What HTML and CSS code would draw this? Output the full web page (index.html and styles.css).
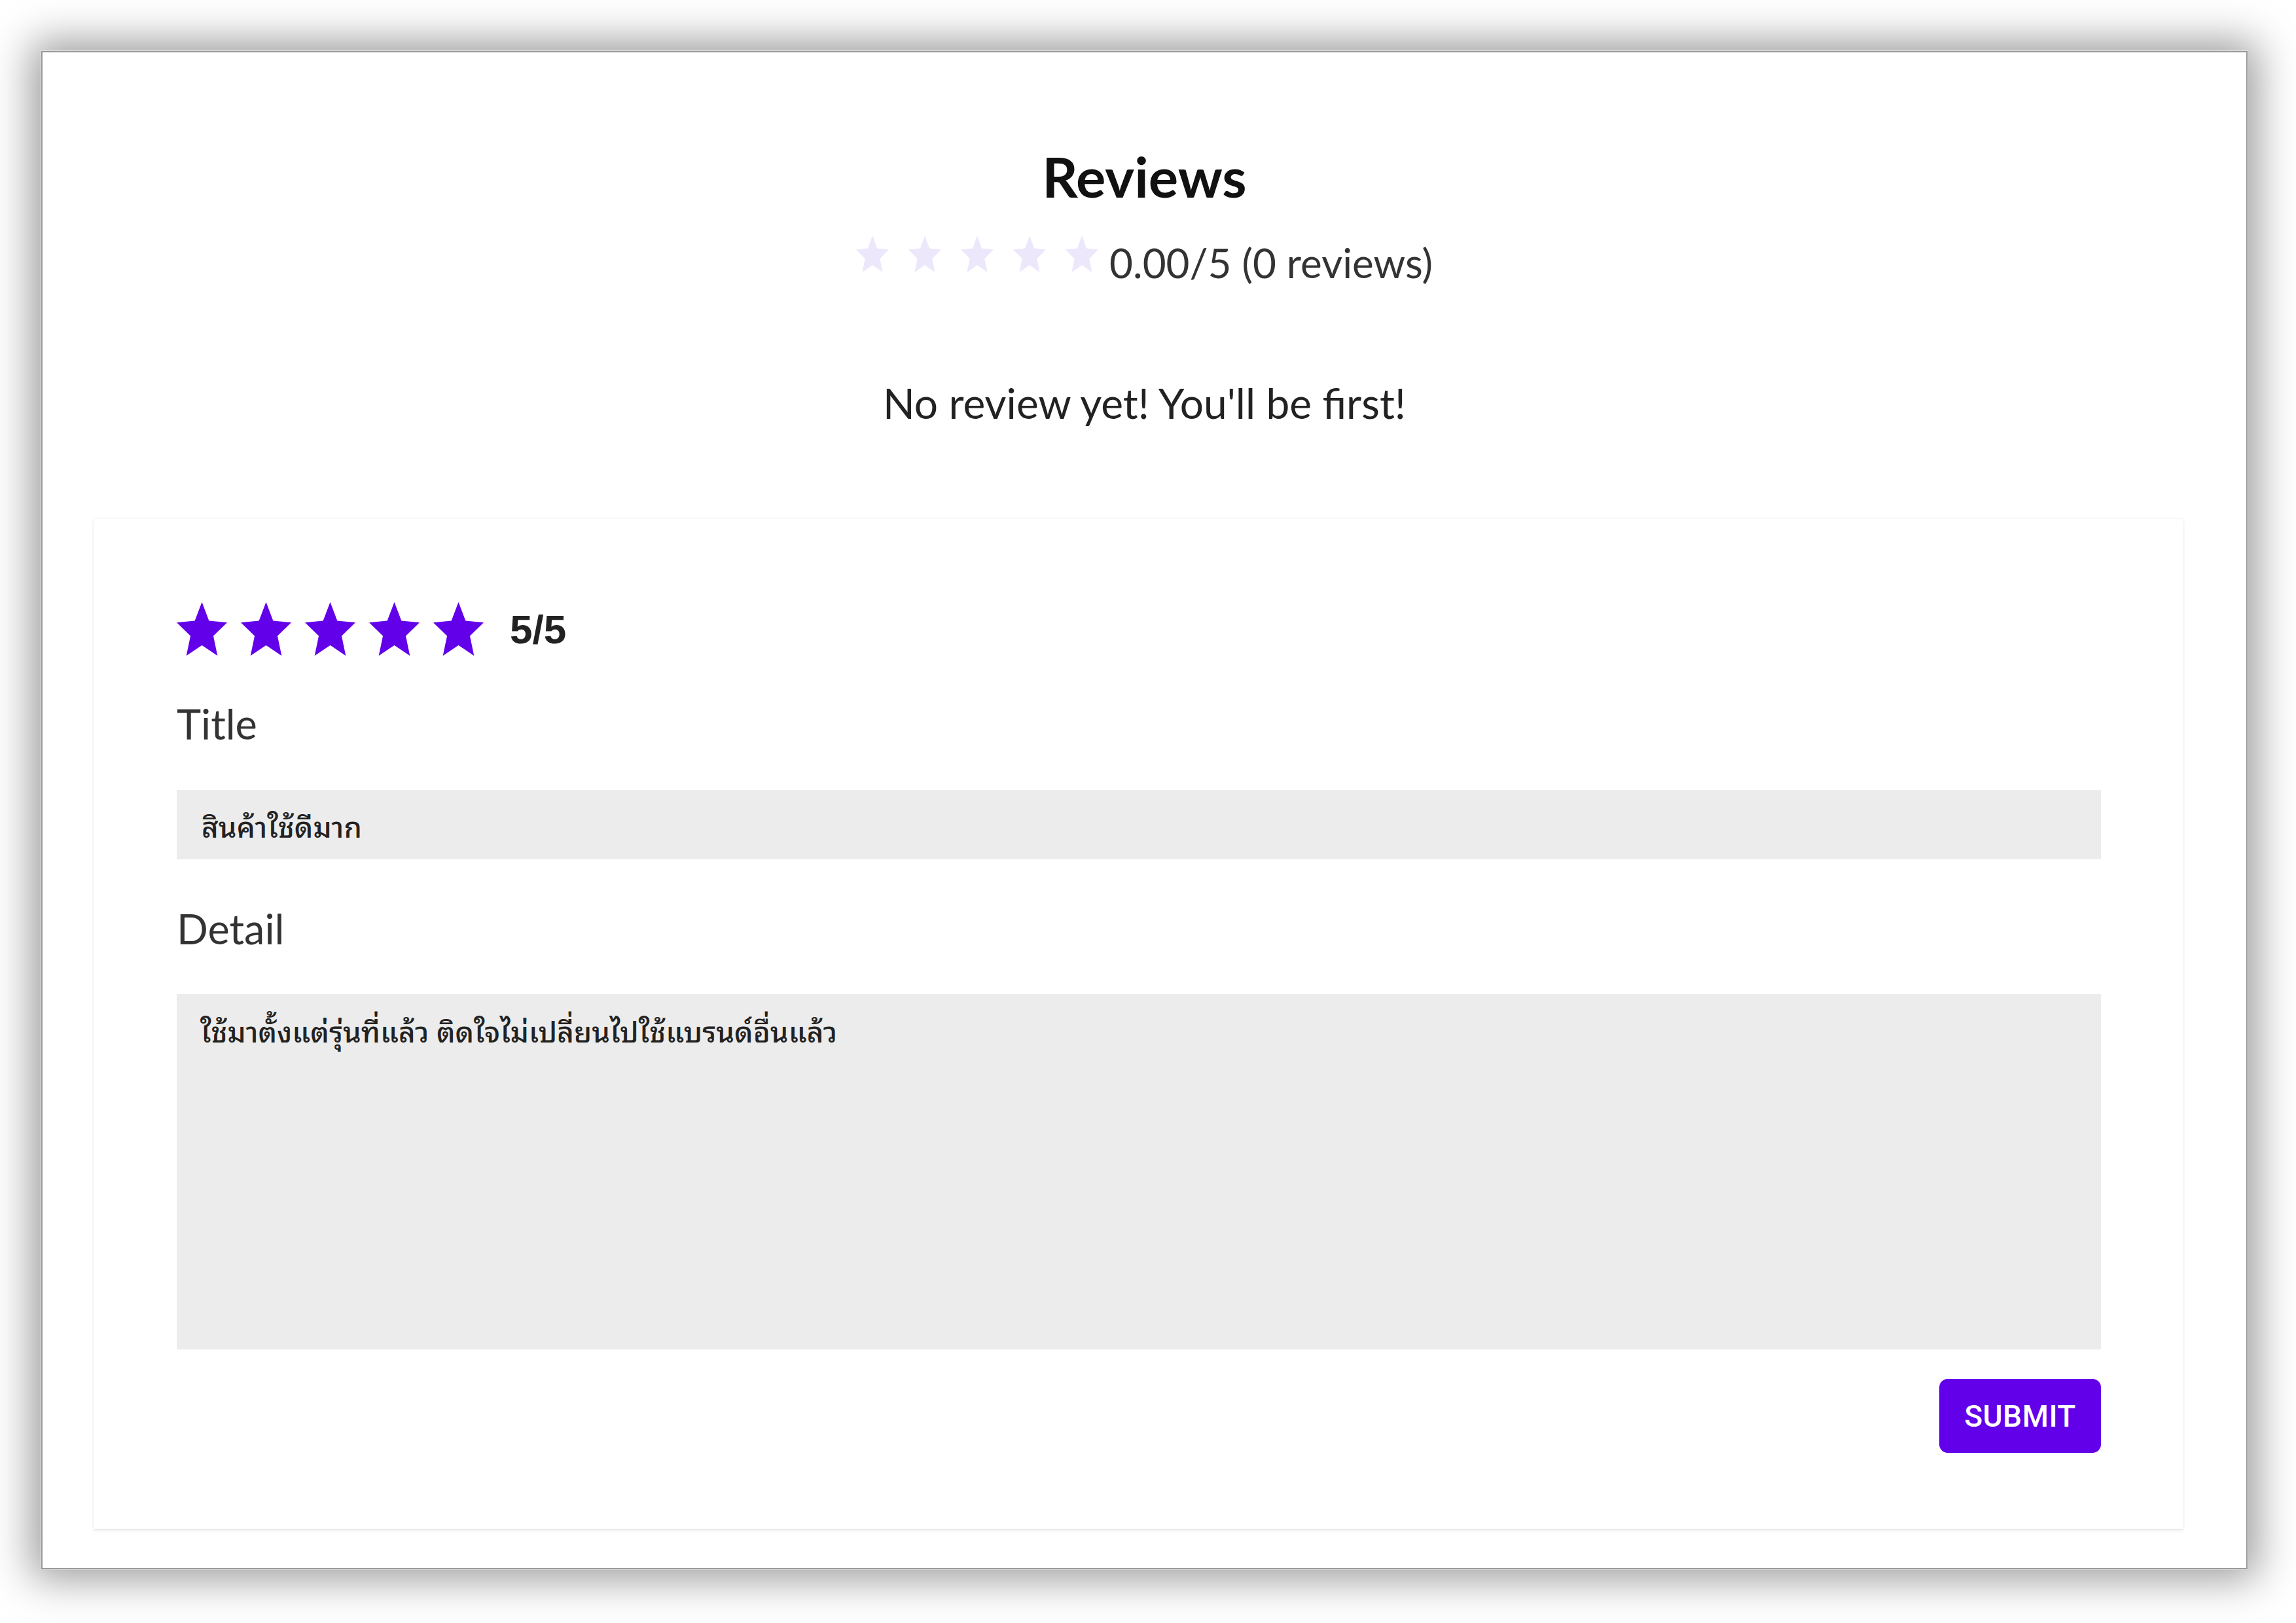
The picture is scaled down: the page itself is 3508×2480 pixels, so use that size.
FILE: index.html
```html
<!DOCTYPE html>
<html lang="th">
<head>
<meta charset="utf-8">
<title>Reviews</title>
<link rel="stylesheet" href="styles.css">
</head>
<body>
<div class="frame">
  <section class="summary">
    <h1 class="heading">Reviews</h1>
    <div class="rating-row">
      <div class="stars stars-light">
        <svg class="star-sm" viewBox="2 2 20 19" preserveAspectRatio="none"><path d="M12 2L14.81 8.63L22 9.24L16.54 13.97L18.18 21L12 17.27L5.82 21L7.46 13.97L2 9.24L9.19 8.63Z"/></svg>
        <svg class="star-sm" viewBox="2 2 20 19" preserveAspectRatio="none"><path d="M12 2L14.81 8.63L22 9.24L16.54 13.97L18.18 21L12 17.27L5.82 21L7.46 13.97L2 9.24L9.19 8.63Z"/></svg>
        <svg class="star-sm" viewBox="2 2 20 19" preserveAspectRatio="none"><path d="M12 2L14.81 8.63L22 9.24L16.54 13.97L18.18 21L12 17.27L5.82 21L7.46 13.97L2 9.24L9.19 8.63Z"/></svg>
        <svg class="star-sm" viewBox="2 2 20 19" preserveAspectRatio="none"><path d="M12 2L14.81 8.63L22 9.24L16.54 13.97L18.18 21L12 17.27L5.82 21L7.46 13.97L2 9.24L9.19 8.63Z"/></svg>
        <svg class="star-sm" viewBox="2 2 20 19" preserveAspectRatio="none"><path d="M12 2L14.81 8.63L22 9.24L16.54 13.97L18.18 21L12 17.27L5.82 21L7.46 13.97L2 9.24L9.19 8.63Z"/></svg>
      </div>
      <span class="rating-text">0.00/5 (0 reviews)</span>
    </div>
    <p class="empty">No review yet! You'll be first!</p>
  </section>

  <form class="card">
    <div class="rate-row">
      <div class="stars stars-purple">
        <svg class="star-lg" viewBox="2 2 20 19" preserveAspectRatio="none"><path d="M12 2L14.81 8.63L22 9.24L16.54 13.97L18.18 21L12 17.27L5.82 21L7.46 13.97L2 9.24L9.19 8.63Z"/></svg>
        <svg class="star-lg" viewBox="2 2 20 19" preserveAspectRatio="none"><path d="M12 2L14.81 8.63L22 9.24L16.54 13.97L18.18 21L12 17.27L5.82 21L7.46 13.97L2 9.24L9.19 8.63Z"/></svg>
        <svg class="star-lg" viewBox="2 2 20 19" preserveAspectRatio="none"><path d="M12 2L14.81 8.63L22 9.24L16.54 13.97L18.18 21L12 17.27L5.82 21L7.46 13.97L2 9.24L9.19 8.63Z"/></svg>
        <svg class="star-lg" viewBox="2 2 20 19" preserveAspectRatio="none"><path d="M12 2L14.81 8.63L22 9.24L16.54 13.97L18.18 21L12 17.27L5.82 21L7.46 13.97L2 9.24L9.19 8.63Z"/></svg>
        <svg class="star-lg" viewBox="2 2 20 19" preserveAspectRatio="none"><path d="M12 2L14.81 8.63L22 9.24L16.54 13.97L18.18 21L12 17.27L5.82 21L7.46 13.97L2 9.24L9.19 8.63Z"/></svg>
      </div>
      <span class="score">5/5</span>
    </div>

    <label class="field-label label-title" for="title">Title</label>
    <input class="field input" id="title" type="text" value="สินค้าใช้ดีมาก">

    <label class="field-label label-detail" for="detail">Detail</label>
    <textarea class="field textarea" id="detail">ใช้มาตั้งแต่รุ่นที่แล้ว ติดใจไม่เปลี่ยนไปใช้แบรนด์อื่นแล้ว</textarea>

    <div class="actions">
      <button class="submit" type="button">SUBMIT</button>
    </div>
  </form>
</div>
</body>
</html>
```

FILE: styles.css
```css
html, body {
  margin: 0;
  padding: 0;
  background: #ffffff;
}

body {
  box-sizing: border-box;
  min-height: 2480px;
  padding: 78px 0 82px 63px;
  font-family: Lato, "Open Sans", sans-serif;
  color: #222;
}

.frame {
  box-sizing: border-box;
  width: 3371px;
  height: 2320px;
  background: #ffffff;
  border: 2px solid #9a9a9a;
  box-shadow: 0 0 0 1px #e2e2e2, 0 0 60px 14px rgba(0, 0, 0, 0.40);
  display: flex;
  flex-direction: column;
}

.summary {
  display: flex;
  flex-direction: column;
  align-items: center;
  padding-top: 139px;
}

.heading {
  margin: 0;
  font-family: Lato, sans-serif;
  font-weight: 700;
  font-size: 85px;
  line-height: 100px;
  color: #111;
}

.rating-row {
  margin-top: 42px;
  display: flex;
  align-items: center;
  gap: 17px;
  height: 80px;
}

.stars {
  display: flex;
}

.stars-light {
  gap: 30px;
  margin-bottom: 26px;
}

.star-sm {
  width: 50px;
  height: 56px;
  fill: #ede7fb;
}

.rating-text {
  font-family: Lato, sans-serif;
  font-size: 62px;
  line-height: 80px;
  color: #333;
}

.empty {
  margin: 135px 0 0;
  font-family: Lato, sans-serif;
  font-size: 64px;
  line-height: 80px;
  color: #222;
}

.card {
  margin: 137px 96px 0 78px;
  padding: 127px 126px 116px 127px;
  background: #fff;
  box-shadow: 0 3px 4px rgba(0, 0, 0, 0.08), 0 0 3px rgba(0, 0, 0, 0.07);
  display: flex;
  flex-direction: column;
}

.rate-row {
  display: flex;
  align-items: center;
  gap: 40px;
  height: 82px;
}

.stars-purple {
  gap: 21px;
}

.star-lg {
  width: 77px;
  height: 82px;
  fill: #6200ea;
}

.score {
  font-family: "Liberation Sans", Arial, sans-serif;
  font-weight: 700;
  font-size: 62px;
  color: #222;
}

.field-label {
  display: block;
  font-family: Lato, sans-serif;
  font-size: 63px;
  line-height: 80px;
  color: #333;
}

.label-title {
  margin-top: 64px;
}

.label-detail {
  margin-top: 66px;
}

.field {
  box-sizing: border-box;
  width: 100%;
  border: none;
  outline: none;
  background: #ececec;
  font-family: "Noto Sans Thai Looped", "Noto Sans Thai", Tahoma, "Noto Sans", sans-serif;
  font-size: 44px;
  font-weight: 500;
  color: #222;
  margin: 0;
}

.input {
  margin-top: 61px;
  height: 106px;
  padding: 0 38px;
}

.textarea {
  margin-top: 60px;
  height: 543px;
  padding: 22px 36px;
  resize: none;
  line-height: 64px;
  display: block;
}

.actions {
  margin-top: 45px;
  display: flex;
  justify-content: flex-end;
}

.submit {
  width: 247px;
  height: 113px;
  padding: 0;
  border: none;
  border-radius: 13px;
  background: #6200ea;
  color: #fff;
  font-family: Roboto, sans-serif;
  font-weight: 500;
  font-size: 46px;
  letter-spacing: 0.5px;
}
```
